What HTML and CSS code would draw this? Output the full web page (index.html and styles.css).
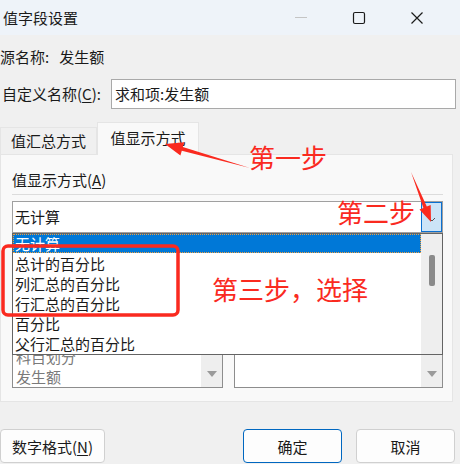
FILE: index.html
```html
<!DOCTYPE html>
<html lang="zh-CN">
<head>
    <meta charset="UTF-8">
    <meta name="viewport" content="width=device-width, initial-scale=1.0">
    <title>值字段设置</title>
    <link rel="stylesheet" href="styles.css">
</head>
<body>
    <div class="titlebar">
        <span class="title">值字段设置</span>
        <div class="controls">
            <span class="ctl"><svg width="14" height="14" viewBox="0 0 14 14"><line x1="1" y1="6.5" x2="13" y2="6.5" stroke="#c4c4c4" stroke-width="1"/></svg></span>
            <span class="ctl"><svg width="14" height="14" viewBox="0 0 14 14"><rect x="1.5" y="1.5" width="11" height="11" rx="1.5" fill="none" stroke="#1b1b1b" stroke-width="1.2"/></svg></span>
            <span class="ctl"><svg width="14" height="14" viewBox="0 0 14 14"><path d="M1.5 1.5 L12.5 12.5 M12.5 1.5 L1.5 12.5" stroke="#1b1b1b" stroke-width="1.2"/></svg></span>
        </div>
    </div>

    <div class="content">
        <div class="source">源名称:&nbsp;&nbsp;&nbsp;发生额</div>
        <div class="name-row">
            <label class="name-label">自定义名称(<u>C</u>):</label>
            <div class="name-input">求和项:发生额</div>
        </div>

        <div class="tabs">
            <div class="tab">值汇总方式</div>
            <div class="tab active">值显示方式</div>
        </div>
        <div class="panel">
            <div class="group-label">值显示方式(<u>A</u>)</div>
            <div class="separator"></div>
            <div class="combo">
                <span class="combo-text">无计算</span>
                <span class="combo-btn"><svg width="10" height="8" viewBox="0 0 10 8"><polyline points="2,2 5,5 8,2" fill="none" stroke="#555" stroke-width="1"/></svg></span>
            </div>
            <div class="field-labels">
                <span>基本字段(<u>F</u>):</span>
                <span>基本项(<u>I</u>):</span>
            </div>
            <div class="field-lists">
                <div class="listbox disabled">
                    <div class="list-items">
                        <div class="list-item">科目划分</div>
                        <div class="list-item">发生额</div>
                    </div>
                    <div class="list-scroll"><span class="tri"></span></div>
                </div>
                <div class="listbox disabled">
                    <div class="list-items"></div>
                    <div class="list-scroll"><span class="tri"></span></div>
                </div>
            </div>

            <div class="dropdown">
                <div class="options">
                    <div class="option selected">无计算</div>
                    <div class="option">总计的百分比</div>
                    <div class="option">列汇总的百分比</div>
                    <div class="option">行汇总的百分比</div>
                    <div class="option">百分比</div>
                    <div class="option">父行汇总的百分比</div>
                </div>
                <div class="scrollbar"><span class="thumb"></span></div>
            </div>
        </div>

        <div class="buttons">
            <button class="btn">数字格式(<u>N</u>)</button>
            <div class="btn-right">
                <button class="btn default">确定</button>
                <button class="btn">取消</button>
            </div>
        </div>
    </div>

    <svg class="marks" width="460" height="464" viewBox="0 0 460 464">
        <polygon points="165,144 184.2,142.2 182.8,147 250,168 181.8,150.8 180.4,155.6" fill="#fa2a1f"/>
        <polygon points="431,222 419.5,209.4 423.4,207.9 411,172 426.8,206.5 430.7,205" fill="#fa2a1f"/>
        <rect x="3" y="246" width="175" height="69" rx="5" fill="none" stroke="#fa2a1f" stroke-width="3.5"/>
    </svg>
    <div class="note note-1">第一步</div>
    <div class="note note-2">第二步</div>
    <div class="note note-3">第三步，选择</div>
</body>
</html>
```

FILE: styles.css
```css
body {
    margin: 0;
    width: 460px;
    height: 464px;
    overflow: hidden;
    position: relative;
    background-color: #f0f0f0;
    color: #1a1a1a;
    font-family: "Noto Sans CJK SC", "Noto Sans", sans-serif;
    font-size: 15px;
    line-height: 20px;
}

u { text-decoration-thickness: 1px; text-underline-offset: 2px; }

.titlebar {
    height: 35px;
    background-color: #eef3f9;
    display: flex;
    align-items: center;
    justify-content: space-between;
}

.title { padding-left: 3px; }

.controls {
    display: flex;
    padding-right: 14px;
}

.ctl {
    width: 58px;
    height: 35px;
    display: flex;
    align-items: center;
    justify-content: center;
}

.source {
    margin-top: 12px;
    height: 20px;
}

.name-row {
    margin-top: 12px;
    display: flex;
    align-items: center;
    height: 30px;
}

.name-label {
    width: 111px;
    padding-left: 2px;
    box-sizing: border-box;
}

.name-input {
    width: 345px;
    height: 30px;
    box-sizing: border-box;
    border: 1px solid #a9a9a9;
    background: white;
    padding: 0 3px;
    line-height: 28px;
}

.tabs {
    margin-top: 13px;
    height: 32px;
    display: flex;
    align-items: flex-end;
}

.tab {
    width: 97px;
    height: 27px;
    box-sizing: border-box;
    border: 1px solid #e5e5e5;
    border-bottom: none;
    background-color: #f0f0f0;
    text-align: center;
    line-height: 26px;
}

.tab.active {
    width: 102px;
    height: 33px;
    margin-bottom: -1px;
    background-color: #f9f9f9;
    position: relative;
    z-index: 1;
    line-height: 30px;
}

.panel {
    width: 453px;
    height: 248px;
    box-sizing: border-box;
    border: 1px solid #e5e5e5;
    background-color: #f9f9f9;
    padding: 15px 9px 0 11px;
    position: relative;
}

.group-label { height: 20px; }

.separator {
    margin-top: 4px;
    height: 1px;
    background-color: #dcdcdc;
}

.combo {
    margin-top: 6px;
    height: 32px;
    box-sizing: border-box;
    border: 1px solid #a0a0a0;
    background: white;
    display: flex;
    align-items: center;
    justify-content: space-between;
}

.combo-text { padding-left: 2px; }

.combo-btn {
    width: 21px;
    height: 30px;
    box-sizing: border-box;
    border: 1px solid #0a6fd0;
    background-color: #cce4f7;
    display: flex;
    align-items: center;
    justify-content: center;
    padding-top: 6px;
}

.field-labels {
    margin-top: 100px;
    height: 21px;
    display: flex;
    gap: 92px;
}

.field-lists {
    display: flex;
    justify-content: space-between;
}

.listbox {
    width: 211px;
    height: 34px;
    box-sizing: border-box;
    border: 1px solid #8d8d8d;
    background: white;
    display: flex;
    overflow: hidden;
}

.listbox + .listbox { width: 209px; }

.list-items {
    flex: 1;
    margin-top: -8px;
    padding-left: 3px;
}

.disabled .list-item { color: #7a7a7a; }

.list-scroll {
    width: 21px;
    background-color: #eeeeee;
    display: flex;
    align-items: center;
    justify-content: center;
    padding-top: 6px;
}

.tri {
    width: 0;
    height: 0;
    border-left: 5px solid transparent;
    border-right: 5px solid transparent;
    border-top: 6px solid #9a9a9a;
}

.dropdown {
    position: absolute;
    left: 11px;
    top: 78px;
    width: 431px;
    height: 122px;
    box-sizing: border-box;
    border: 1px solid #646464;
    background: white;
    display: flex;
    z-index: 2;
}

.options { flex: 1; }

.option {
    height: 20px;
    line-height: 19px;
    padding-left: 2px;
    white-space: nowrap;
}

.option.selected {
    background-color: #0078d7;
    color: white;
    outline: 1px dotted #f0a040;
    outline-offset: -1px;
    height: 19px;
    margin-bottom: 1px;
}

.scrollbar {
    width: 21px;
    background-color: #eeeeee;
    position: relative;
}

.thumb {
    position: absolute;
    left: 8px;
    top: 21px;
    width: 6px;
    height: 31px;
    border-radius: 2px;
    background-color: #8a8a8a;
}

.buttons {
    margin-top: 27px;
    display: flex;
    justify-content: space-between;
    padding-right: 5px;
}

.btn-right {
    display: flex;
    gap: 14px;
}

.btn {
    height: 34px;
    width: 105px;
    border: 1px solid #d0d0d0;
    border-radius: 4px;
    background-color: #fdfdfd;
    font-family: inherit;
    font-size: 15px;
    color: #1a1a1a;
    padding: 0;
}

.btn-right .btn { width: 99px; }

.btn.default { border-color: #0067c0; }

.marks {
    position: absolute;
    left: 0;
    top: 0;
    z-index: 5;
    pointer-events: none;
}

.note {
    position: absolute;
    z-index: 6;
    color: #fa2a1f;
    font-size: 26px;
    line-height: 26px;
    white-space: nowrap;
}

.note-1 { left: 249px; top: 144px; }
.note-2 { left: 337px; top: 199px; }
.note-3 { left: 212px; top: 276px; }
```
